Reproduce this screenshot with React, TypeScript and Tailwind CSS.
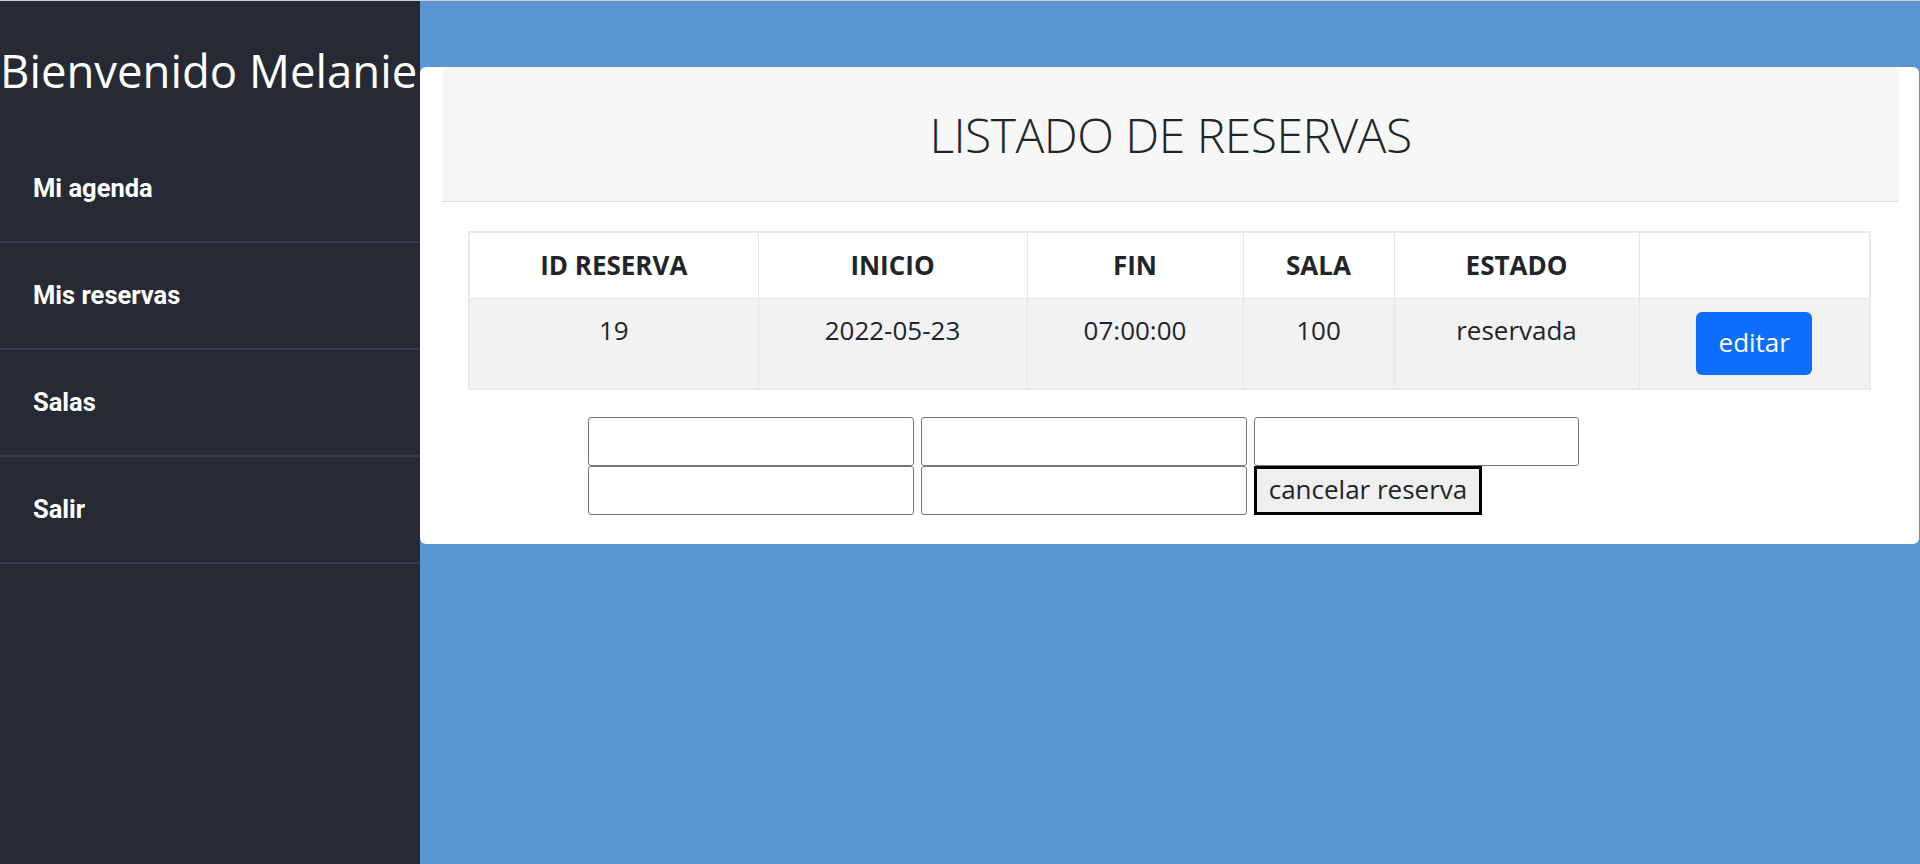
import React from "react";

const navItems = ["Mi agenda", "Mis reservas", "Salas", "Salir"];

const columns = [
    { label: "ID RESERVA", width: "w-[289px]" },
    { label: "INICIO", width: "w-[269px]" },
    { label: "FIN", width: "w-[216px]" },
    { label: "SALA", width: "w-[151px]" },
    { label: "ESTADO", width: "w-[245px]" },
    { label: "", width: "" },
];

const reservas = [
    { id: 19, inicio: "2022-05-23", fin: "07:00:00", sala: 100, estado: "reservada" },
];

const App = () => {
    return (
        <div className="flex min-h-[864px] w-full border-t border-[#cfcfcf] font-['Open_Sans',sans-serif] text-[#212529]">
            {/* sidebar */}
            <aside className="w-[420px] shrink-0 bg-[#252a34] text-white">
                <div className="h-[135px] flex items-center pt-[4px]">
                    <h1 className="text-[45.5px] leading-none whitespace-nowrap">Bienvenido Melanie</h1>
                </div>
                <nav className="flex flex-col">
                    {navItems.map(item => (
                        <a key={item} href="#" className="h-[107px] flex items-center pl-[33px] border-b-2 border-[#353a46] font-['Roboto',sans-serif] font-bold text-[25.5px]">
                            {item}
                        </a>
                    ))}
                </nav>
            </aside>

            {/* main */}
            <main className="flex-1 bg-[#5b95d3] pt-[66px] pr-px">
                <div className="bg-white rounded-md pb-[29px]">
                    <div className="ml-[22px] mr-[20px] h-[135px] bg-[#f7f7f7] border-b border-[#dcdcdc] rounded-t-md flex items-center justify-center">
                        <h2 className="text-[48px] font-light tracking-[-0.5px] pt-[2px]">LISTADO DE RESERVAS</h2>
                    </div>

                    <div className="px-[48px] pt-[29px]">
                        <table className="w-full border-collapse border-2 border-[#e9e9e9] text-[26px] text-center">
                            <thead>
                                <tr className="bg-white">
                                    {columns.map((c, i) => (
                                        <th key={i} className={`${c.width} h-[66px] border border-[#e6e6e6] font-bold`}>{c.label}</th>
                                    ))}
                                </tr>
                            </thead>
                            <tbody>
                                {reservas.map(r => (
                                    <tr key={r.id} className="bg-[#f2f2f2] align-top">
                                        <td className="border border-[#e6e6e6] pt-[12px]">{r.id}</td>
                                        <td className="border border-[#e6e6e6] pt-[12px]">{r.inicio}</td>
                                        <td className="border border-[#e6e6e6] pt-[12px]">{r.fin}</td>
                                        <td className="border border-[#e6e6e6] pt-[12px]">{r.sala}</td>
                                        <td className="border border-[#e6e6e6] pt-[12px]">{r.estado}</td>
                                        <td className="border border-[#e6e6e6] py-[13px]">
                                            <button className="bg-[#0d6efd] text-white rounded-md h-[63px] w-[116px] pb-[2px] leading-none">editar</button>
                                        </td>
                                    </tr>
                                ))}
                            </tbody>
                        </table>
                    </div>

                    <form className="pl-[168px] pt-[27px] flex flex-col" onSubmit={e => e.preventDefault()}>
                        <div className="flex gap-[7px]">
                            <input type="text" className="w-[326px] h-[49px] bg-white border border-[#767676] rounded-[3px]" />
                            <input type="text" className="w-[326px] h-[49px] bg-white border border-[#767676] rounded-[3px]" />
                            <input type="text" className="w-[325px] h-[49px] bg-white border border-[#767676] rounded-[3px]" />
                        </div>
                        <div className="flex gap-[7px]">
                            <input type="text" className="w-[326px] h-[49px] bg-white border border-[#767676] rounded-[3px]" />
                            <input type="text" className="w-[326px] h-[49px] bg-white border border-[#767676] rounded-[3px]" />
                            <button type="submit" className="h-[49px] w-[228px] bg-[#efefef] border-[3px] border-black text-[26px] leading-none pb-[2px]">cancelar reserva</button>
                        </div>
                    </form>
                </div>
            </main>
        </div>
    )
}

export default App;
